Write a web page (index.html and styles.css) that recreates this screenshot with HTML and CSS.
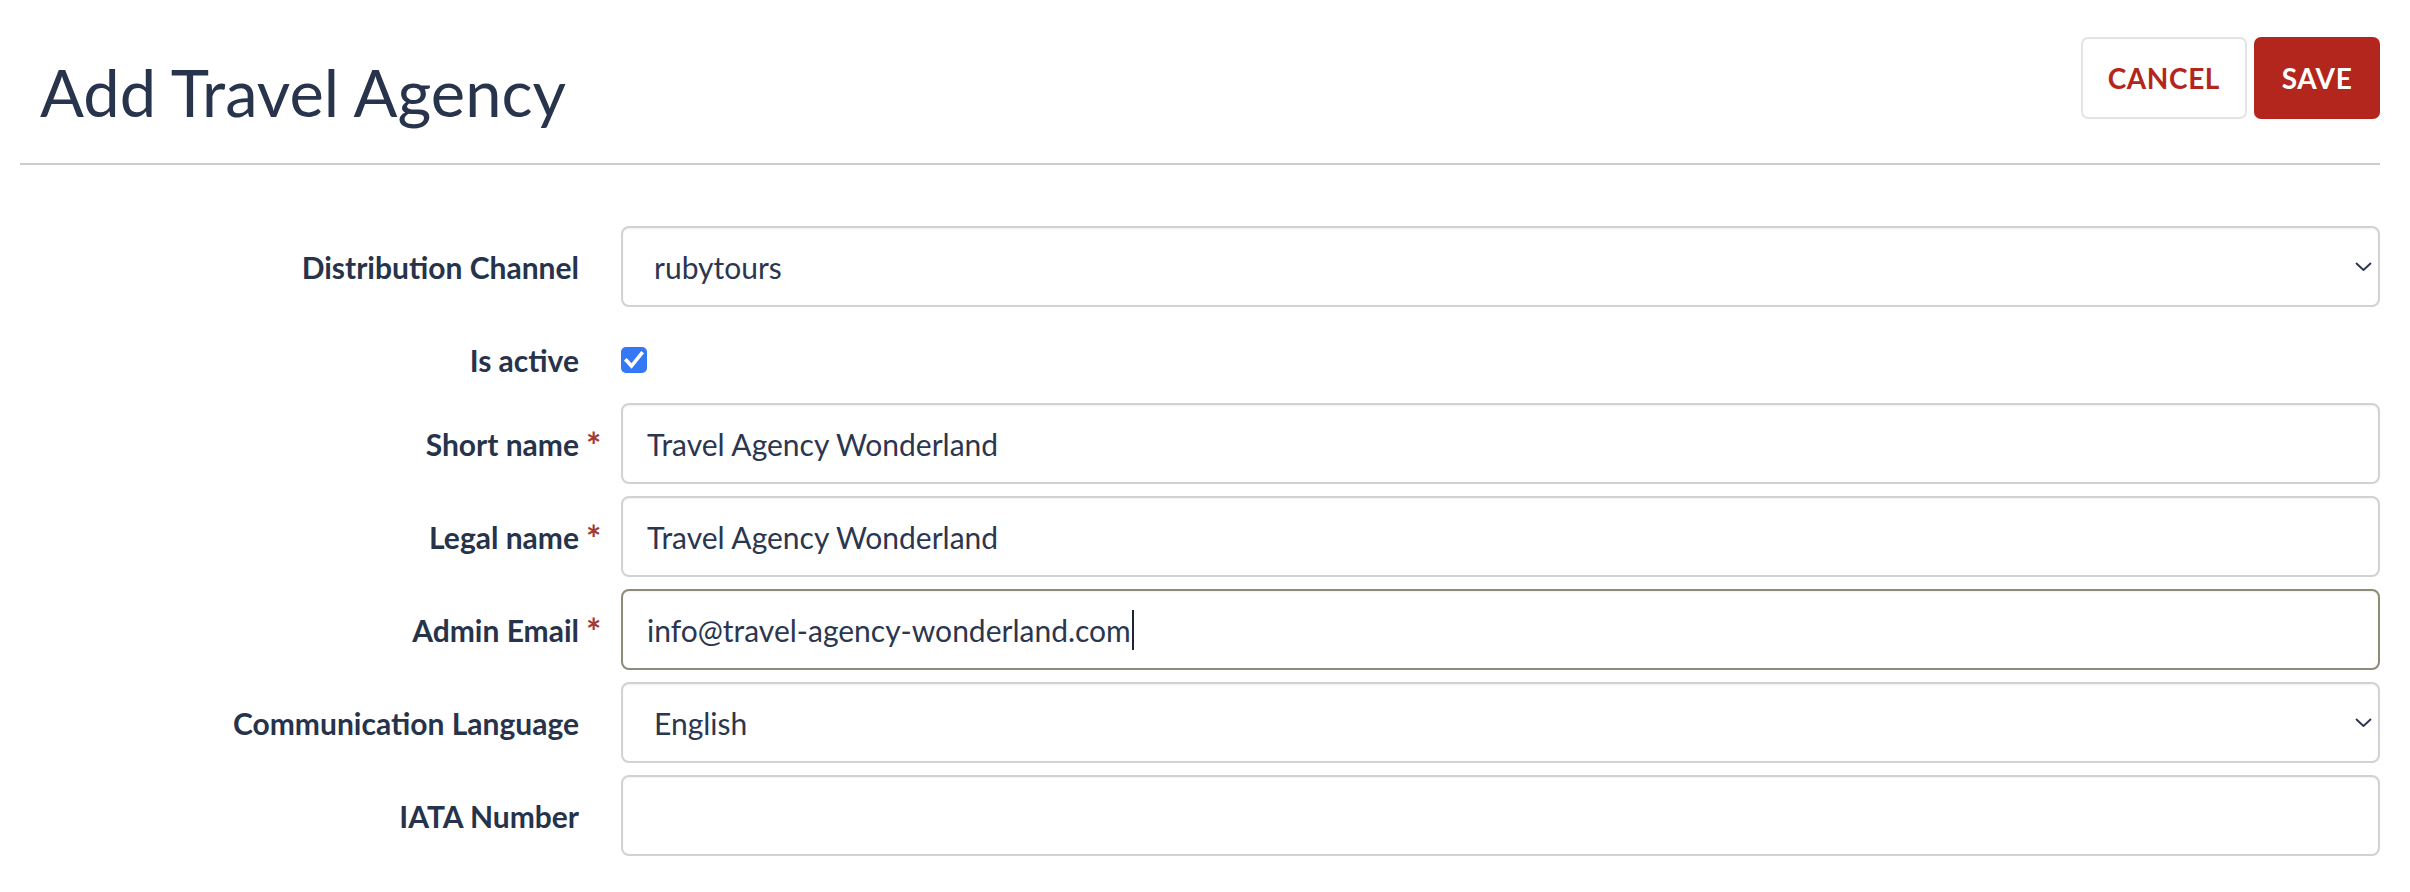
FILE: index.html
```html
<!DOCTYPE html>
<html lang="en">
<head>
<meta charset="utf-8">
<title>Add Travel Agency</title>
<link rel="stylesheet" href="styles.css">
</head>
<body>
<div class="page">
  <header class="page-header">
    <h1 class="page-title">Add Travel Agency</h1>
    <div class="actions">
      <button type="button" class="btn btn-secondary">Cancel</button>
      <button type="submit" class="btn btn-primary">Save</button>
    </div>
  </header>

  <form class="form">
    <div class="form-row">
      <label class="form-label" for="channel">Distribution Channel</label>
      <div class="select-wrap">
        <select id="channel" class="control select">
          <option>rubytours</option>
        </select>
        <svg class="chevron" width="17" height="9" viewBox="0 0 17 9" aria-hidden="true"><path d="M1 1 L8.5 8 L16 1" fill="none" stroke="currentColor" stroke-width="2"/></svg>
      </div>
    </div>

    <div class="form-row form-row-check">
      <label class="form-label" for="active">Is active</label>
      <div class="check-wrap">
        <span class="checkbox" id="active" role="checkbox" aria-checked="true">
          <svg width="26" height="26" viewBox="0 0 26 26" aria-hidden="true"><path d="M5.5 13.5 L10.5 19 L20.5 6.5" fill="none" stroke="#fff" stroke-width="3.6" stroke-linecap="square"/></svg>
        </span>
      </div>
    </div>

    <div class="form-row">
      <label class="form-label" for="short">Short name<span class="req">*</span></label>
      <input id="short" class="control" type="text" value="Travel Agency Wonderland">
    </div>

    <div class="form-row">
      <label class="form-label" for="legal">Legal name<span class="req">*</span></label>
      <input id="legal" class="control" type="text" value="Travel Agency Wonderland">
    </div>

    <div class="form-row">
      <label class="form-label" for="email">Admin Email<span class="req">*</span></label>
      <div class="field is-focused">
        <input id="email" class="control control-focused" type="email" value="info@travel-agency-wonderland.com">
        <span class="caret"></span>
      </div>
    </div>

    <div class="form-row">
      <label class="form-label" for="lang">Communication Language</label>
      <div class="select-wrap">
        <select id="lang" class="control select">
          <option>English</option>
        </select>
        <svg class="chevron" width="17" height="9" viewBox="0 0 17 9" aria-hidden="true"><path d="M1 1 L8.5 8 L16 1" fill="none" stroke="currentColor" stroke-width="2"/></svg>
      </div>
    </div>

    <div class="form-row">
      <label class="form-label" for="iata">IATA Number</label>
      <input id="iata" class="control" type="text" value="">
    </div>
  </form>
</div>
<script src="script.js"></script>
</body>
</html>
```

FILE: styles.css
```css
* { box-sizing: border-box; }

html, body {
  margin: 0;
  padding: 0;
  background: #ffffff;
}

body {
  font-family: "Lato", "Liberation Sans", sans-serif;
  color: #27334b;
}

.page {
  margin: 0 30px 0 20px;
}

.page-header {
  display: flex;
  justify-content: space-between;
  align-items: flex-start;
  padding: 37px 0 44px 20px;
  border-bottom: 2px solid #cccccc;
}

.page-title {
  margin: 29px 0 0;
  font-size: 65px;
  line-height: 52px;
  font-weight: 400;
  color: #28344c;
}

.actions {
  display: flex;
  gap: 7px;
}

.btn {
  height: 82px;
  padding: 0 25px;
  border-radius: 7px;
  font-family: "Lato", "Liberation Sans", sans-serif;
  font-size: 28px;
  font-weight: 700;
  letter-spacing: 0.6px;
  text-transform: uppercase;
  cursor: pointer;
}

.btn-secondary {
  background: #ffffff;
  color: #b3261e;
  border: 2px solid #e4e4e4;
  min-width: 165px;
}

.btn-primary {
  background: #b3261e;
  color: #ffffff;
  border: 2px solid #b3261e;
  min-width: 126px;
}

.form {
  margin-top: 61px;
}

.form-row {
  display: grid;
  grid-template-columns: 559px 1fr;
  column-gap: 42px;
  align-items: center;
  margin-bottom: 12px;
}

.form-row-check {
  min-height: 72px;
  padding-top: 10px;
}

.form-label {
  position: relative;
  text-align: right;
  font-size: 30px;
  font-weight: 700;
  color: #27334b;
  line-height: 1.2;
}

.req {
  position: absolute;
  left: 100%;
  top: -2px;
  margin-left: 7px;
  font-size: 36px;
  color: #a33a35;
  font-weight: 700;
}

.control {
  display: block;
  width: 100%;
  height: 81px;
  margin: 0;
  padding: 0 24px;
  border: 2px solid #d2d2d2;
  border-radius: 8px;
  background: #ffffff;
  box-shadow: inset 0 1px 2px rgba(0, 0, 0, 0.06);
  font-family: "Lato", "Liberation Sans", sans-serif;
  font-size: 30px;
  color: #2b3650;
  outline: none;
  caret-color: transparent;
}

.control-focused {
  border-color: #8e8b78;
}

.select-wrap,
.field {
  position: relative;
}

.select {
  appearance: none;
  -webkit-appearance: none;
  padding-left: 31px;
  padding-right: 50px;
}

.chevron {
  position: absolute;
  right: 8px;
  top: 36px;
  color: #2f3a51;
  pointer-events: none;
}

.check-wrap {
  display: flex;
  align-items: center;
}

.checkbox {
  display: block;
  width: 26px;
  height: 26px;
  border-radius: 5px;
  background: #3478f6;
}

.checkbox svg {
  display: block;
}

.caret {
  position: absolute;
  top: 21px;
  left: 506px;
  width: 2px;
  height: 40px;
  background: #1d2535;
  pointer-events: none;
}
```

FILE: script.js
```js
(function () {
  function placeCaret() {
    var input = document.getElementById('email');
    var caret = document.querySelector('.is-focused .caret');
    if (!input || !caret) return;
    var cs = getComputedStyle(input);
    var ctx = document.createElement('canvas').getContext('2d');
    ctx.font = cs.fontWeight + ' ' + cs.fontSize + ' ' + cs.fontFamily;
    var w = ctx.measureText(input.value).width;
    var left = parseFloat(cs.borderLeftWidth) + parseFloat(cs.paddingLeft) + w + 1;
    caret.style.left = left + 'px';
  }
  if (document.fonts && document.fonts.ready) {
    document.fonts.ready.then(placeCaret);
  }
  placeCaret();
})();
```
